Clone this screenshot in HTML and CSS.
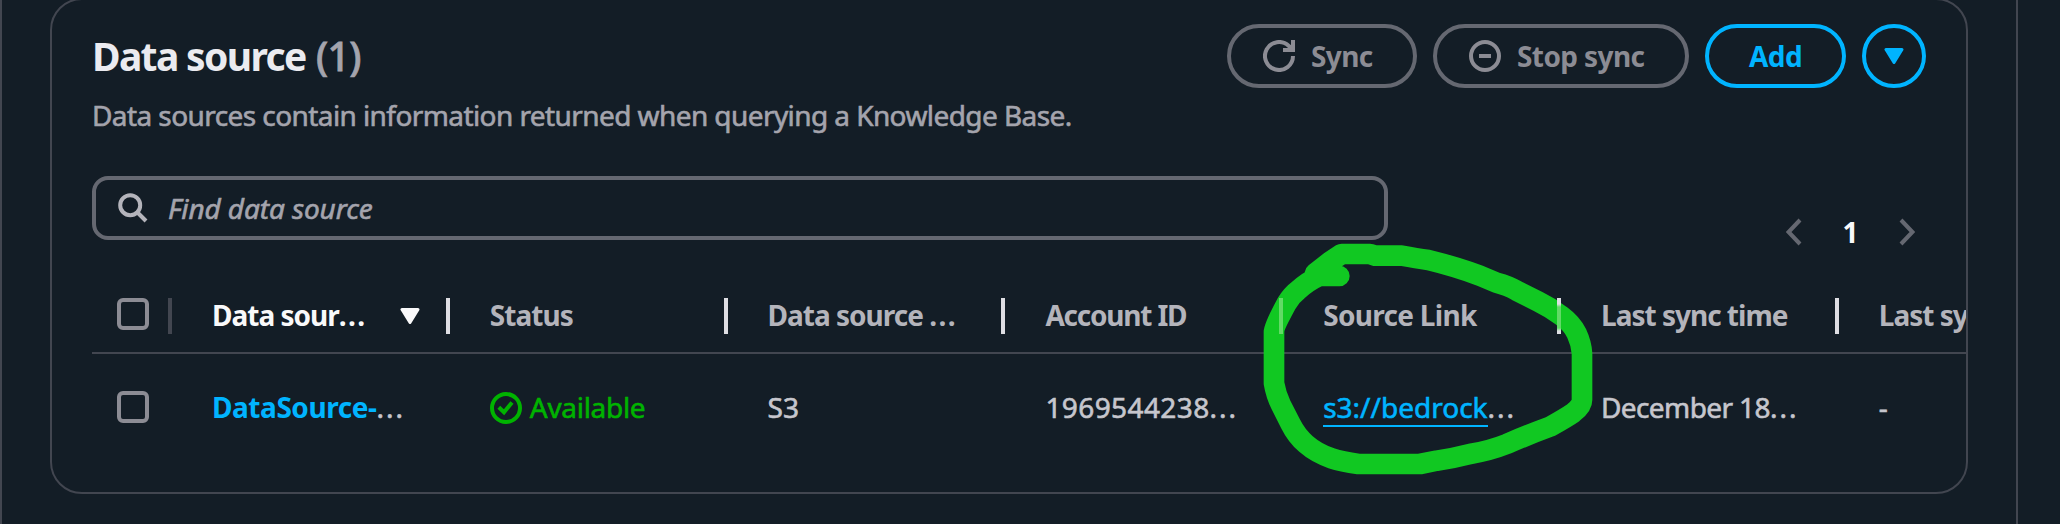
FILE: index.html
```html
<!DOCTYPE html>
<html lang="en">
<head>
<meta charset="utf-8">
<title>Data source</title>
<link rel="stylesheet" href="styles.css">
</head>
<body>
<main class="panel">
  <section class="card">
    <header class="card-header">
      <div class="heading">
        <h2 class="title">Data source <span class="count">(1)</span></h2>
        <p class="description">Data sources contain information returned when querying a Knowledge Base.</p>
      </div>
      <div class="actions">
        <button class="btn btn-disabled btn-sync" disabled>
          <svg class="icon" viewBox="0 0 16 16"><path d="M15 8a7 7 0 1 1-2.200-5.100L15 5"/><path d="M15 0v5h-5"/></svg>
          <span class="label">Sync</span>
        </button>
        <button class="btn btn-disabled btn-stop" disabled>
          <svg class="icon" viewBox="0 0 16 16"><circle cx="8" cy="8" r="7"/><path d="M5 8h6"/></svg>
          <span class="label">Stop sync</span>
        </button>
        <button class="btn btn-add"><span class="label">Add</span></button>
        <button class="btn btn-round" aria-label="More actions">
          <svg class="caret" viewBox="0 0 20 16"><path d="M2 1.500h16L10 14.500z"/></svg>
        </button>
      </div>
    </header>

    <div class="tools">
      <div class="search">
        <svg class="icon-search" viewBox="0 0 30 30"><circle cx="12.200" cy="12.200" r="10"/><path d="M19.500 19.500l8.500 8.500"/></svg>
        <span class="placeholder">Find data source</span>
      </div>
      <nav class="pages">
        <svg class="chevron" viewBox="0 0 16 28"><path d="M14 2L2.600 14 14 26"/></svg>
        <span class="page">1</span>
        <svg class="chevron" viewBox="0 0 16 28"><path d="M2 2l11.400 12L2 26"/></svg>
      </nav>
    </div>

    <div class="table">
      <div class="row row-head">
        <div class="cell-check"><span class="checkbox"></span><span class="sep sep-dim"></span></div>
        <div class="cell sorted"><span class="t-source">Data sour</span><span class="dots">...</span><svg class="caret" viewBox="0 0 20 16"><path d="M2 1.500h16L10 14.500z"/></svg><span class="sep"></span></div>
        <div class="cell"><span class="t-status">Status</span><span class="sep"></span></div>
        <div class="cell"><span class="t-type">Data source&nbsp;</span><span class="dots">...</span><span class="sep"></span></div>
        <div class="cell"><span class="t-account">Account ID</span><span class="sep sep-marked"></span></div>
        <div class="cell"><span class="t-link">Source Link</span><span class="sep sep-crossed"></span></div>
        <div class="cell"><span class="t-time">Last sync time</span><span class="sep"></span></div>
        <div class="cell"><span class="t-time">Last sync</span></div>
      </div>
      <div class="row row-body">
        <div class="cell-check"><span class="checkbox"></span></div>
        <div class="cell"><a class="link-name">DataSource-</a><span class="dots">...</span></div>
        <div class="cell status"><svg class="icon" viewBox="0 0 16 16"><circle cx="8" cy="8" r="7"/><path d="M4.400 7.600l2.600 2.500 4-4.900"/></svg><span class="d-status">Available</span></div>
        <div class="cell"><span>S3</span></div>
        <div class="cell"><span class="d-account">1969544238</span><span class="dots">...</span></div>
        <div class="cell"><a class="link-url">s3://bedrock</a><span class="dots">...</span></div>
        <div class="cell"><span class="d-time">December 18</span><span class="dots">...</span></div>
        <div class="cell"><span>-</span></div>
      </div>
    </div>
  </section>
</main>
<svg class="marker" viewBox="0 0 1200 912"><path d="M328 168H268Q232 185 205 210Q185 225 170 250Q132 320 132 335V490Q138 525 153 555L182 612Q200 648 228 672Q260 700 305 715Q335 725 385 732H570L620 722Q670 715 720 702Q780 692 830 672Q900 642 960 620Q1010 592 1030 578Q1056 558 1056 540V400Q1054 370 1040 340Q1025 310 995 288Q960 262 925 245L860 212Q835 197 800 188L750 167Q670 138 595 120Q560 115 515 107H435L420 102H335L300 125L255 160"/></svg>
</body>
</html>
```

FILE: styles.css
```css
* { box-sizing: border-box; }

body {
  margin: 0;
  width: 2060px;
  height: 524px;
  overflow: hidden;
  background: #131d26;
  color: #c6c6cd;
  font-family: "Noto Sans", "Open Sans", sans-serif;
  font-size: 28px;
  line-height: 40px;
}

.panel {
  width: 2018px;
  height: 524px;
  padding-left: 48px;
  border: solid #424650;
  border-width: 0 2px;
  overflow: hidden;
}

.card {
  width: 1918px;
  height: 496px;
  margin-top: -2px;
  padding: 24px 0 0 40px;
  border: 2px solid #424650;
  border-radius: 32px;
  overflow: hidden;
}

.card-header {
  display: flex;
  justify-content: space-between;
  height: 152px;
  padding-right: 40px;
}

.title {
  margin: 8px 0 0;
  font-size: 39px;
  line-height: 48px;
  letter-spacing: -1.65px;
  color: #ebebf0;
  white-space: nowrap;
}

.count {
  margin-left: 2px;
  color: #a4a4ad;
  font-weight: 500;
  letter-spacing: -0.6px;
  -webkit-text-stroke: 0.8px;
}

.description {
  margin: 15px 0 0;
  color: #a4a4ad;
  letter-spacing: -0.58px;
  white-space: nowrap;
  -webkit-text-stroke: 0.6px;
}

.actions { display: flex; gap: 16px; height: 64px; }

.btn {
  display: flex;
  align-items: center;
  justify-content: center;
  height: 64px;
  padding: 0;
  border: 4px solid #00b4ff;
  border-radius: 32px;
  background: none;
  color: #00b4ff;
  font: 700 28px/40px "Noto Sans", sans-serif;
  letter-spacing: -0.6px;
  white-space: nowrap;
}

.label { margin-top: -1px; }

.btn-disabled {
  justify-content: flex-start;
  gap: 16px;
  padding-left: 32px;
  border-color: #656871;
  color: #8c8c94;
}

.btn-sync { width: 190px; }
.btn-stop { width: 256px; }
.btn-add { width: 141px; }
.btn-round { width: 64px; }

.icon {
  flex: none;
  width: 32px;
  height: 32px;
  fill: none;
  stroke: currentColor;
  stroke-width: 2;
}

.caret {
  flex: none;
  width: 20px;
  height: 16px;
  fill: currentColor;
  stroke: currentColor;
  stroke-width: 3;
  stroke-linejoin: round;
}

.tools { display: flex; height: 122px; }

.search {
  display: flex;
  align-items: center;
  width: 1296px;
  height: 64px;
  padding-left: 22px;
  border: 4px solid #656871;
  border-radius: 16px;
}

.icon-search {
  width: 30px;
  height: 30px;
  margin-right: 20px;
  fill: none;
  stroke: #b4b4bb;
  stroke-width: 4;
}

.placeholder {
  color: #a4a4ad;
  font-style: italic;
  letter-spacing: -0.1px;
  white-space: nowrap;
  -webkit-text-stroke: 0.6px;
}

.pages {
  display: flex;
  align-items: center;
  justify-content: space-between;
  width: 129px;
  height: 40px;
  margin: 36px 0 0 398px;
  color: #f9f9fa;
  font-weight: 700;
}

.page { margin-top: -1px; }

.chevron {
  width: 16px;
  height: 28px;
  fill: none;
  stroke: #656871;
  stroke-width: 4;
}

.row { display: flex; width: 2100px; }

.row-head {
  height: 56px;
  border-bottom: 2px solid #424650;
  color: #b4b4bb;
  font-weight: 700;
  line-height: 34px;
}

.row-body { height: 120px; padding-top: 33px; -webkit-text-stroke: 0.6px; }

.cell-check {
  display: flex;
  flex: none;
  width: 80px;
  padding-left: 25px;
}

.checkbox {
  width: 32px;
  height: 32px;
  border: 4px solid #8c8c94;
  border-radius: 6px;
}

.row-body .checkbox { margin-top: 4px; }

.cell {
  display: flex;
  flex: none;
  width: 277.8px;
  height: 40px;
  padding-left: 40px;
  white-space: nowrap;
}

.sorted { color: #f9f9fa; }
.sorted .caret { margin: 10px 0 0 auto; }
.sorted .sep { margin-left: 26px; }

.dots { letter-spacing: 2px; }
.row-head .dots { letter-spacing: 1.4px; }

.t-source { letter-spacing: -1px; }
.t-status { letter-spacing: -0.95px; }
.t-type { letter-spacing: -1px; }
.t-account { letter-spacing: -1.2px; }
.t-link { letter-spacing: -0.7px; }
.t-time { letter-spacing: -1px; }
.d-status { letter-spacing: -0.3px; }
.d-account { letter-spacing: 0.4px; }
.d-time { letter-spacing: -0.6px; }

.sep {
  flex: none;
  width: 4px;
  height: 36px;
  margin-left: auto;
  background: #dedee3;
}

.sep-dim { margin-left: 19px; background: #424650; }
.sep-marked, .sep-crossed { position: relative; z-index: 2; }
.sep-marked { background: #62da66; }
.sep-crossed { background: linear-gradient(#dedee3 6px, #62da66 9px 30px, #dedee3 33px); }

.status { gap: 8px; color: #00b300; }
.status .icon { margin-top: 5px; }
.link-name { color: #00b4ff; font-weight: 700; letter-spacing: -0.45px; -webkit-text-stroke: 0; }
.link-url { height: 40px; color: #00b4ff; border-bottom: 2px solid #00b4ff; }

.marker {
  position: absolute;
  left: 1230px;
  top: 220px;
  z-index: 1;
  width: 400px;
  height: 304px;
  fill: none;
  stroke: #11c822;
  stroke-width: 62;
  stroke-linecap: round;
  stroke-linejoin: round;
  filter: blur(0.7px);
}
```
